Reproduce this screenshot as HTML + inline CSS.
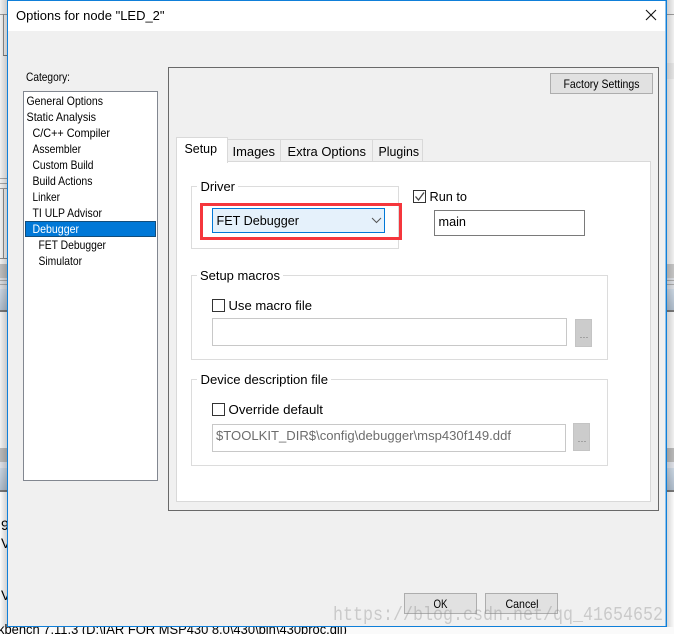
<!DOCTYPE html>
<html><head><meta charset="utf-8"><style>
html,body{margin:0;padding:0;background:#f0f0f0;width:674px;height:634px;overflow:hidden}
svg{display:block}
text{font-family:"Liberation Sans",sans-serif;font-size:12px;fill:#000}
.b{font-size:13px}
</style></head><body>
<svg width="674" height="634" viewBox="0 0 674 634" xmlns="http://www.w3.org/2000/svg" shape-rendering="crispEdges">
<defs>
<linearGradient id="sl" x1="0" x2="1" y1="0" y2="0"><stop offset="0" stop-color="#000" stop-opacity="0"/><stop offset="1" stop-color="#000" stop-opacity=".16"/></linearGradient>
<linearGradient id="sr" x1="0" x2="1" y1="0" y2="0"><stop offset="0" stop-color="#000" stop-opacity=".14"/><stop offset="1" stop-color="#000" stop-opacity="0"/></linearGradient>
<linearGradient id="blue" x1="0" x2="0" y1="0" y2="1"><stop offset="0" stop-color="#c9d4e0"/><stop offset="1" stop-color="#aebccb"/></linearGradient>
</defs>
<rect width="674" height="634" fill="#f0f0f0"/>
<!-- background window left -->
<rect x="0" y="14" width="7" height="1" fill="#9a9a9a"/>
<rect x="3" y="14" width="1" height="42" fill="#8a8a8a"/>
<rect x="3" y="55" width="4" height="1" fill="#777"/>
<rect x="0" y="178" width="7" height="1" fill="#a5a5a5"/>
<rect x="0" y="183" width="7" height="1" fill="#a5a5a5"/>
<rect x="0" y="188" width="7" height="1" fill="#999"/>
<rect x="3" y="189" width="1" height="70" fill="#8a8a8a"/>
<rect x="0" y="258" width="7" height="1" fill="#888"/>
<rect x="0" y="264" width="7" height="14" fill="#bcbcbc"/>
<rect x="0" y="278" width="7" height="11" fill="#d8dbe0"/>
<rect x="0" y="280" width="7" height="1" fill="#a8a8a8"/>
<rect x="0" y="284" width="7" height="1" fill="#a8a8a8"/>
<rect x="0" y="289" width="7" height="21" fill="url(#blue)"/>
<rect x="0" y="310" width="7" height="2" fill="#777"/>
<rect x="0" y="448" width="7" height="14" fill="#b8b8b8"/>
<rect x="0" y="462" width="7" height="6" fill="#dcdfe6"/>
<rect x="0" y="468" width="7" height="22" fill="url(#blue)"/>
<rect x="0" y="490" width="7" height="2" fill="#777"/>
<rect x="0" y="492" width="7" height="142" fill="#fafafa"/>
<!-- background window right -->
<rect x="667" y="14" width="7" height="1" fill="#9a9a9a"/>
<rect x="667" y="63" width="7" height="16" fill="#e4e4e4"/>
<rect x="667" y="264" width="7" height="14" fill="#c4c4c4"/>
<rect x="667" y="278" width="7" height="11" fill="#d8dbe0"/>
<rect x="667" y="280" width="7" height="1" fill="#a8a8a8"/>
<rect x="667" y="284" width="7" height="1" fill="#a8a8a8"/>
<rect x="667" y="289" width="7" height="21" fill="url(#blue)"/>
<rect x="667" y="310" width="7" height="2" fill="#777"/>
<rect x="667" y="448" width="7" height="14" fill="#b8b8b8"/>
<rect x="667" y="462" width="7" height="6" fill="#dcdfe6"/>
<rect x="667" y="468" width="7" height="22" fill="url(#blue)"/>
<rect x="667" y="490" width="7" height="2" fill="#777"/>
<rect x="667" y="492" width="7" height="142" fill="#fafafa"/>
<rect x="0" y="627" width="674" height="7" fill="#fafafa"/>
<!-- background text -->
<text x="1" y="530" style="font-size:14px">9</text>
<text x="1" y="548" style="font-size:14px">V</text>
<text x="1" y="600" style="font-size:14px">V</text>
<text x="-2" y="634" style="font-size:14px" textLength="349" lengthAdjust="spacingAndGlyphs">kbench 7.11.3 (D:\IAR FOR MSP430 8.0\430\bin\430proc.dll)</text>
<!-- shadows -->
<rect x="0" y="0" width="7" height="627" fill="url(#sl)"/>
<rect x="667" y="0" width="7" height="627" fill="url(#sr)"/>
<!-- dialog -->
<rect x="7" y="0" width="660" height="627" fill="#0f7fd9"/>
<rect x="8" y="1" width="658" height="625" fill="#f0f0f0"/>
<rect x="8" y="1" width="658" height="30" fill="#fff"/>
<rect x="665" y="1" width="1" height="625" fill="#8fc1e9"/>
<text class="b" x="16" y="20" textLength="148.5" lengthAdjust="spacingAndGlyphs">Options for node "LED_2"</text>
<path d="M646 10 L656 20 M656 10 L646 20" stroke="#111" stroke-width="1.1" fill="none" shape-rendering="geometricPrecision"/>
<text x="26" y="81" textLength="44" lengthAdjust="spacingAndGlyphs">Category:</text>
<!-- list -->
<rect x="23.5" y="91.5" width="134" height="389" fill="#fff" stroke="#828790"/>
<rect x="25" y="221" width="131" height="16" fill="#0078d7"/>
<rect x="25.5" y="221.5" width="130" height="15" fill="none" stroke="#222" stroke-dasharray="1 1"/>
<text x="26.5" y="105" textLength="76.5" lengthAdjust="spacingAndGlyphs">General Options</text>
<text x="26.5" y="121" textLength="69.5" lengthAdjust="spacingAndGlyphs">Static Analysis</text>
<text x="32.5" y="137" textLength="77.5" lengthAdjust="spacingAndGlyphs">C/C++ Compiler</text>
<text x="32.5" y="153" textLength="48.5" lengthAdjust="spacingAndGlyphs">Assembler</text>
<text x="32.5" y="169" textLength="61" lengthAdjust="spacingAndGlyphs">Custom Build</text>
<text x="32.5" y="185" textLength="60" lengthAdjust="spacingAndGlyphs">Build Actions</text>
<text x="32.5" y="201" textLength="27.5" lengthAdjust="spacingAndGlyphs">Linker</text>
<text x="32.5" y="217" textLength="69.5" lengthAdjust="spacingAndGlyphs">TI ULP Advisor</text>
<text x="32.5" y="233" textLength="46.5" lengthAdjust="spacingAndGlyphs" style="fill:#fff">Debugger</text>
<text x="38.5" y="249" textLength="67.5" lengthAdjust="spacingAndGlyphs">FET Debugger</text>
<text x="38.5" y="265" textLength="43.5" lengthAdjust="spacingAndGlyphs">Simulator</text>
<!-- right panel -->
<rect x="168.5" y="67.5" width="490" height="443" fill="#f0f0f0" stroke="#696969"/>
<rect x="550.5" y="73.5" width="102" height="20" fill="#e1e1e1" stroke="#adadad"/>
<text x="563.5" y="88" textLength="76" lengthAdjust="spacingAndGlyphs">Factory Settings</text>
<!-- tab pane -->
<rect x="176.5" y="161.5" width="474" height="340" fill="#fff" stroke="#d9d9d9"/>
<rect x="227.5" y="139.5" width="53" height="22" fill="#f0f0f0" stroke="#d9d9d9"/>
<rect x="280.5" y="139.5" width="92" height="22" fill="#f0f0f0" stroke="#d9d9d9"/>
<rect x="372.5" y="139.5" width="50" height="22" fill="#f0f0f0" stroke="#d9d9d9"/>
<rect x="176.5" y="137.5" width="51" height="25" fill="#fff" stroke="#d9d9d9"/>
<rect x="177" y="161" width="50" height="2" fill="#fff"/>
<text class="b" x="184.5" y="153" textLength="32.5" lengthAdjust="spacingAndGlyphs">Setup</text>
<text class="b" x="232.5" y="156" textLength="42.5" lengthAdjust="spacingAndGlyphs">Images</text>
<text class="b" x="287.5" y="156" textLength="78.5" lengthAdjust="spacingAndGlyphs">Extra Options</text>
<text class="b" x="378.5" y="156" textLength="40.5" lengthAdjust="spacingAndGlyphs">Plugins</text>
<!-- driver -->
<rect x="191.5" y="186.5" width="207" height="62" fill="none" stroke="#dcdcdc"/>
<rect x="197" y="182" width="41" height="10" fill="#fff"/>
<text class="b" x="200.5" y="191" textLength="34.5" lengthAdjust="spacingAndGlyphs">Driver</text>
<rect x="212.5" y="208.5" width="172" height="24" fill="#e5f1fb" stroke="#0078d7"/>
<text class="b" x="216.5" y="225" textLength="82.5" lengthAdjust="spacingAndGlyphs">FET Debugger</text>
<path d="M372 218 L376.5 222.5 L381 218" fill="none" stroke="#555" stroke-width="1" shape-rendering="geometricPrecision"/>
<rect x="201.5" y="204.5" width="199" height="34" fill="none" stroke="#f5363c" stroke-width="3"/>
<!-- run to -->
<rect x="413.5" y="190.5" width="12" height="12" fill="#fff" stroke="#333"/>
<path d="M415.5 196.5 L418.5 200 L424 192.5" fill="none" stroke="#444" stroke-width="1.3" shape-rendering="geometricPrecision"/>
<text class="b" x="429.5" y="201" textLength="37.5" lengthAdjust="spacingAndGlyphs">Run to</text>
<rect x="434.5" y="210.5" width="150" height="25" fill="#fff" stroke="#7a7a7a"/>
<text class="b" x="438.5" y="226" textLength="27.5" lengthAdjust="spacingAndGlyphs">main</text>
<!-- macros -->
<rect x="191.5" y="275.5" width="416" height="84" fill="none" stroke="#dcdcdc"/>
<rect x="197" y="270" width="86" height="10" fill="#fff"/>
<text class="b" x="200" y="280" textLength="80" lengthAdjust="spacingAndGlyphs">Setup macros</text>
<rect x="212.5" y="299.5" width="12" height="12" fill="#fff" stroke="#333"/>
<text class="b" x="228.5" y="310" textLength="83.5" lengthAdjust="spacingAndGlyphs">Use macro file</text>
<rect x="212.5" y="318.5" width="354" height="27" fill="#fff" stroke="#c8c8c8"/>
<rect x="575" y="319" width="17" height="28" fill="#cccccc"/>
<rect x="575.5" y="319.5" width="16" height="27" fill="none" stroke="#c4c4c4"/>
<text x="579.5" y="338" textLength="9" lengthAdjust="spacingAndGlyphs" style="font-size:9px;fill:#777">...</text>
<!-- device -->
<rect x="191.5" y="379.5" width="416" height="86" fill="none" stroke="#dcdcdc"/>
<rect x="197" y="374" width="134" height="10" fill="#fff"/>
<text class="b" x="200.5" y="384" textLength="127.5" lengthAdjust="spacingAndGlyphs">Device description file</text>
<rect x="212.5" y="403.5" width="12" height="12" fill="#fff" stroke="#333"/>
<text class="b" x="228.5" y="414" textLength="94.5" lengthAdjust="spacingAndGlyphs">Override default</text>
<rect x="212.5" y="424.5" width="353" height="27" fill="#fff" stroke="#c8c8c8"/>
<text class="b" x="216" y="440" textLength="295" lengthAdjust="spacingAndGlyphs" style="fill:#6d6d6d">$TOOLKIT_DIR$\config\debugger\msp430f149.ddf</text>
<rect x="573" y="423" width="17" height="28" fill="#cccccc"/>
<rect x="573.5" y="423.5" width="16" height="27" fill="none" stroke="#c4c4c4"/>
<text x="577.5" y="442" textLength="9" lengthAdjust="spacingAndGlyphs" style="font-size:9px;fill:#777">...</text>
<!-- buttons -->
<rect x="404.5" y="593.5" width="72" height="20" fill="#e1e1e1" stroke="#adadad"/>
<rect x="485.5" y="593.5" width="72" height="20" fill="#e1e1e1" stroke="#adadad"/>
<text x="433.5" y="608" textLength="14" lengthAdjust="spacingAndGlyphs">OK</text>
<text x="505.5" y="608" textLength="33" lengthAdjust="spacingAndGlyphs">Cancel</text>
<!-- watermark -->
<text x="333" y="620" textLength="330" lengthAdjust="spacingAndGlyphs" style="font-family:'Liberation Mono',monospace;font-size:19px;fill:#8c8c8c;fill-opacity:.38" shape-rendering="geometricPrecision">https://blog.csdn.net/qq_41654652</text>
</svg>
</body></html>
